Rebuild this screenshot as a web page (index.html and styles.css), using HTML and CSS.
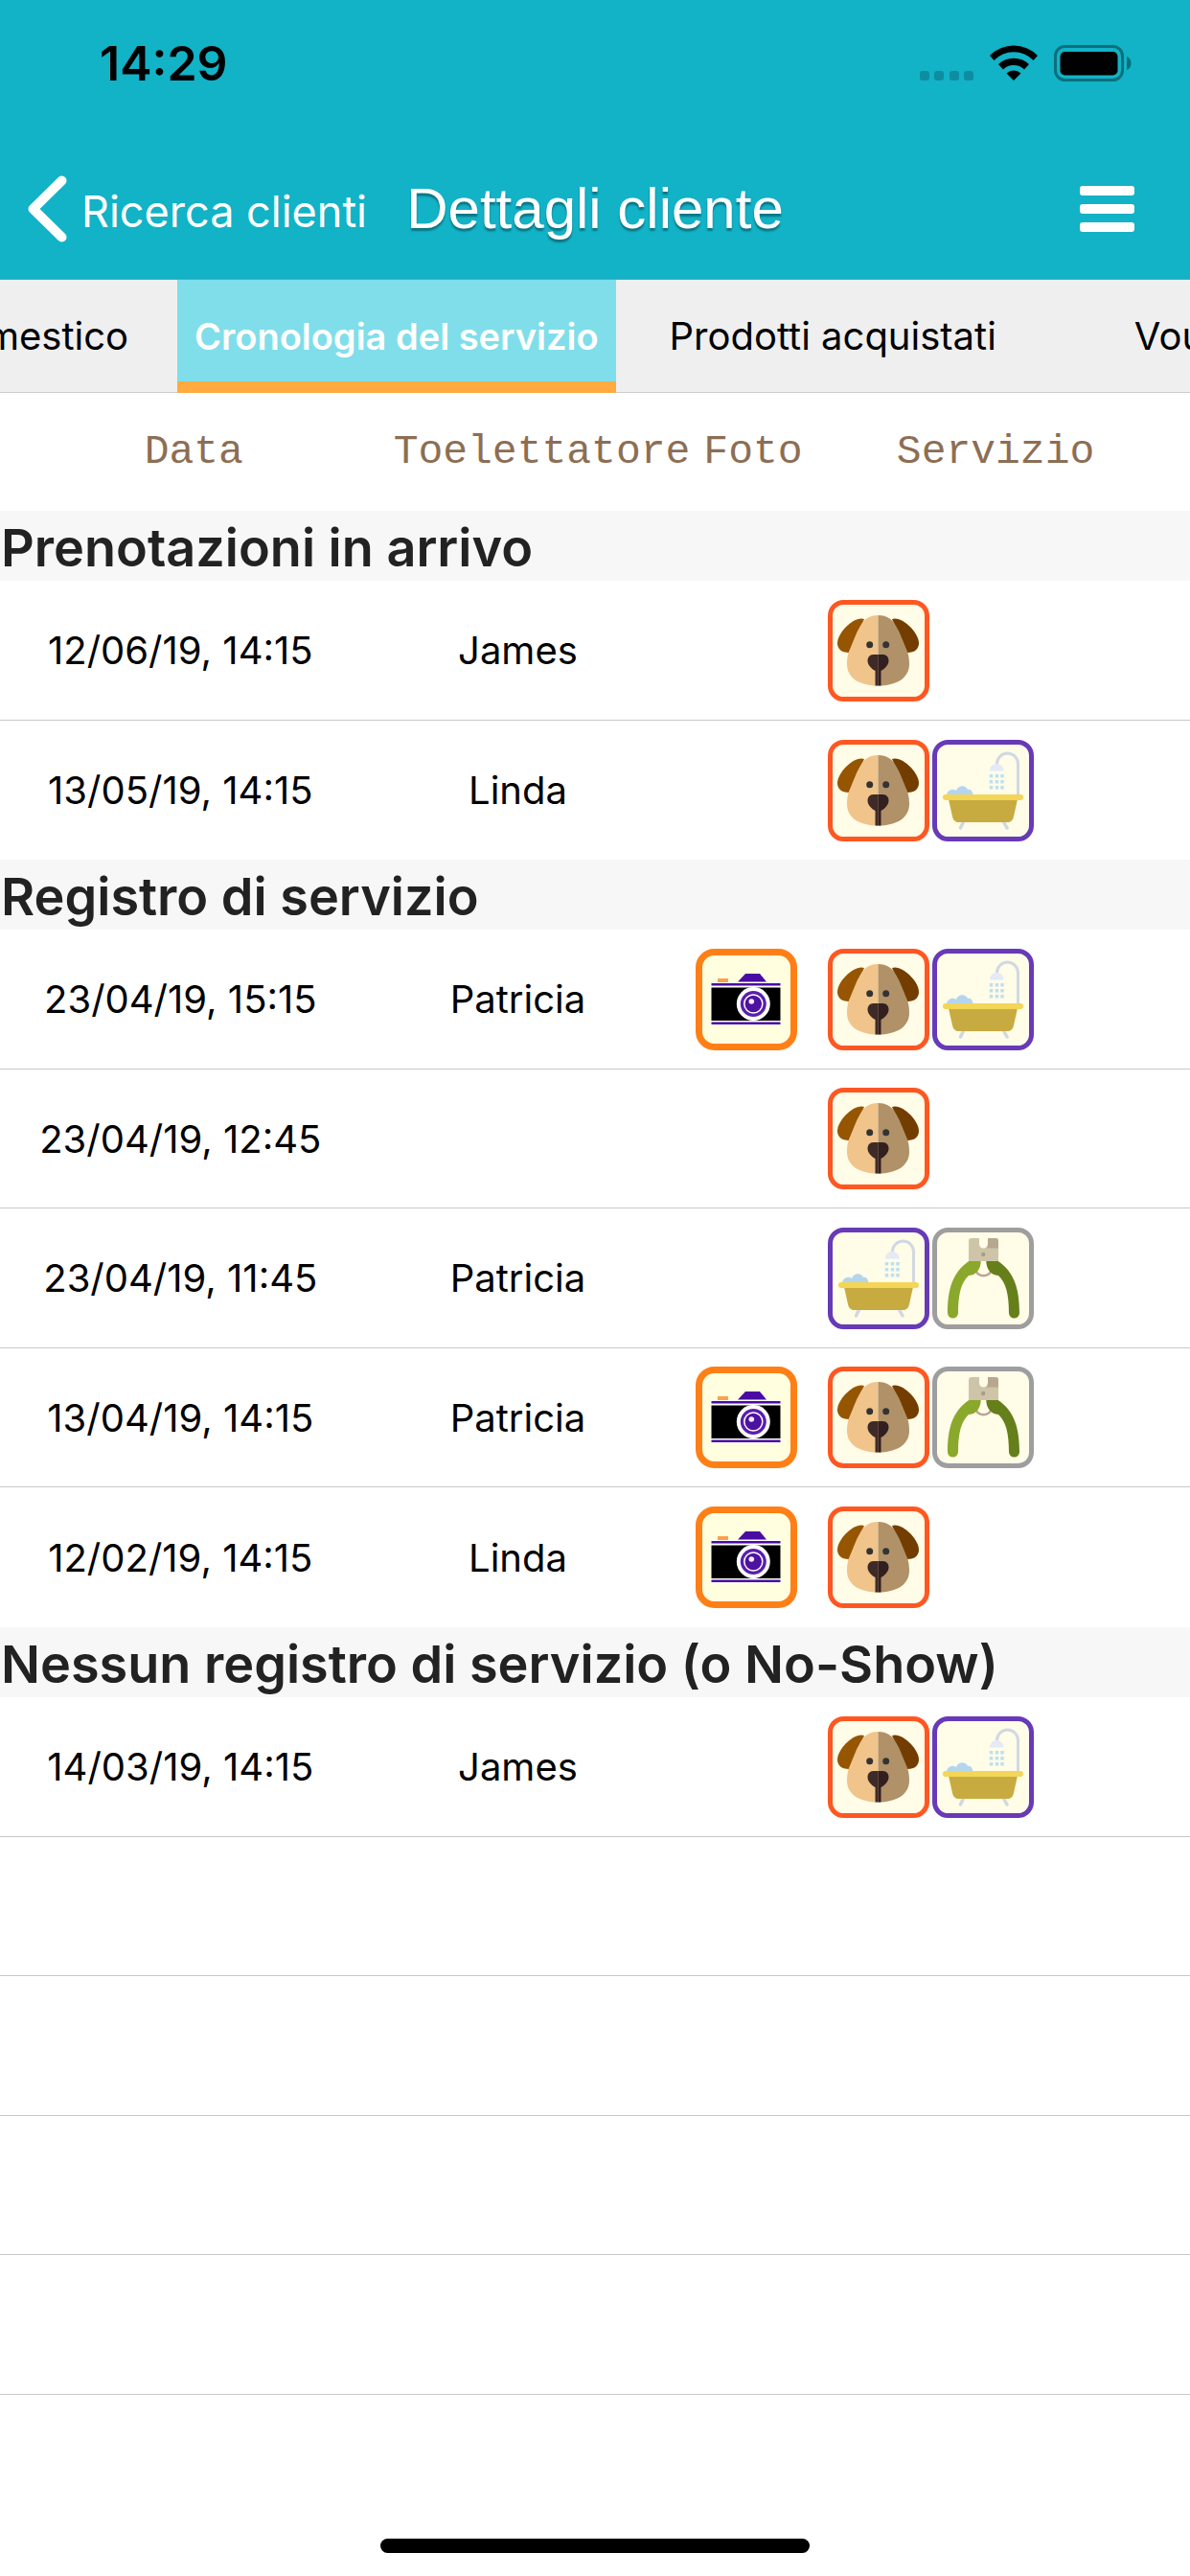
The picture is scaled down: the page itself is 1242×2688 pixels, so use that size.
FILE: index.html
```html
<!DOCTYPE html>
<html lang="it">
<head>
  <meta charset="UTF-8" />
  <meta name="viewport" content="width=device-width, initial-scale=1.0"/>
  <title>Dettagli cliente</title>
  <link rel="stylesheet" href="styles.css">
</head>
<body>
  <!-- icon shapes, used in the table below -->
  <svg class="sprite" aria-hidden="true">
    <symbol id="dog" viewBox="0 0 106 106">
      <rect x="2.5" y="2.5" width="101" height="101" rx="14" fill="#fffce8" stroke="#ff5722" stroke-width="5"/>
      <path d="M38 20C28 16 10 34 10 45c0 6 4 10 12 10z" fill="#965500"/>
      <path d="M67 20c10-4 28 14 28 25 0 6-4 10-12 10z" fill="#733d00"/>
      <path d="M52.5 16C43 16 38 20 34 27 29 35 26 45 22 54c-1.500 4-2 8-2 13 0 15 14 22.500 32.500 22.500z" fill="#f0c48a"/>
      <path d="M52.5 16C62 16 67 20 71 27c5 8 8 18 12 27 1.500 4 2 8 2 13 0 15-14 22.500-32.500 22.500z" fill="#b19168"/>
      <circle cx="43.7" cy="46.7" r="3.5" fill="#333"/>
      <circle cx="60.7" cy="46.7" r="3.5" fill="#333"/>
      <path d="M52.5 57h-5c-4 0-6 3-6 6.500 0 5 5 9 8 10.500v15.500h3z" fill="#3e2b27"/>
      <path d="M52.5 57h5c4 0 6 3 6 6.500 0 5-5 9-8 10.500v15.500h-3z" fill="#321f20"/>
    </symbol>
    <symbol id="bath" viewBox="0 0 106 106">
      <rect x="2.5" y="2.5" width="101" height="101" rx="14" fill="#fffce8" stroke="#673ab7" stroke-width="5"/>
      <path d="M67.5 26v-1a11 11 0 0 1 22 0v33" fill="none" stroke="#d0d9e2" stroke-width="3"/>
      <path d="M60 32.5c0-10 14.500-10 14.500 0z" fill="#e4eaf6"/>
      <path d="M61.5 36v17M67.500 36v17M73 36v17" stroke="#bfdfef" stroke-width="3.5" stroke-dasharray="3.5 2.5"/>
      <path d="M15 58c0-5 6-8 10-5 2-6 10-6 12-1 3-1 5.500 2 5.500 6z" fill="#b5d5ee"/>
      <path d="M32.5 85.500l-3 6.500M74.500 85.500l3.500 6.500" stroke="#d0d9e2" stroke-width="3.5" stroke-linecap="round"/>
      <path d="M17 62h72l-4 18c-1 4-3 6-7 6H28c-4 0-6-2-7-6z" fill="#c8ab40"/>
      <rect x="11" y="57" width="84" height="6" rx="3" fill="#f3d557"/>
    </symbol>
    <symbol id="clipper" viewBox="0 0 106 106">
      <rect x="2.5" y="2.5" width="101" height="101" rx="14" fill="#fffce8" stroke="#9e9e9e" stroke-width="5"/>
      <path d="M46 46c3 5.500 12 5.500 15 0" fill="none" stroke="#b7a795" stroke-width="2.5"/>
      <path d="M39 34.500h11.700c0 8-4 15-12.700 15.500-8 7-11 20-11 39a5.500 5.500 0 0 1-11 0C16 65 21 46 39 34.500z" fill="#8aa82c"/>
      <path d="M68 34.500H56.300c0 8 4 15 12.700 15.500 8 7 11 20 11 39a5.500 5.500 0 0 0 11 0c0-24-5-43-23-54.500z" fill="#657f1a"/>
      <path d="M38 35V14q0-3 3-3h8v6c0 6 9 6 9 0v-6h8q3 0 3 3v21z" fill="#cec5a8"/>
      <path d="M58 11h8q3 0 3 3v7.500H56q2-1 2-4z" fill="#b5a88f"/>
      <circle cx="53.2" cy="28" r="2.2" fill="#aa9b88"/>
    </symbol>
    <symbol id="camera" viewBox="0 0 106 106">
      <rect x="3.5" y="3.5" width="99" height="99" rx="16" fill="#ffffe0" stroke="#ff7f17" stroke-width="7"/>
      <rect x="23" y="31" width="11" height="4" fill="#ffa04d"/>
      <path d="M44 34.500l8-8.500h15l7 8.500z" fill="#4a0ba3"/>
      <rect x="16.5" y="35" width="72" height="44.5" fill="#fff"/>
      <rect x="16.5" y="36" width="72" height="2.5" fill="#4a0ba3"/>
      <rect x="16.5" y="40.5" width="72" height="34.5" fill="#000"/>
      <rect x="16.5" y="76.5" width="72" height="2.5" fill="#4a0ba3"/>
      <circle cx="60.3" cy="57.5" r="17.5" fill="#fff"/>
      <circle cx="60.3" cy="57.5" r="13.5" fill="#5a1fae"/>
      <circle cx="60.3" cy="57.5" r="9.5" fill="#4d12a0" stroke="#fff" stroke-width="1.5"/>
      <circle cx="58.3" cy="55" r="2.8" fill="#f3ecfb"/>
    </symbol>
  </svg>

  <div class="screen">
    <header>
      <div class="status">
        <span>14:29</span>
        <svg width="222" height="38" viewBox="0 0 222 38" aria-hidden="true">
          <g fill="#0f8da0">
            <rect x="1" y="27" width="10" height="10" rx="3"/>
            <rect x="16" y="27" width="10" height="10" rx="3"/>
            <rect x="32" y="27" width="10" height="10" rx="3"/>
            <rect x="47" y="27" width="10" height="10" rx="3"/>
          </g>
          <path d="M74 11a35 35 0 0 1 50 0l-4.500 5a28.500 28.500 0 0 0-41 0z"/>
          <path d="M83 20a23.500 23.500 0 0 1 32 0l-5 5.500a16 16 0 0 0-22 0z"/>
          <path d="M91.500 29.500a11 11 0 0 1 15 0L99 37z"/>
          <rect x="142.5" y="1.5" width="70" height="35" rx="10" fill="none" stroke="#0c6f7c" stroke-width="3"/>
          <rect x="147.5" y="7" width="60" height="24.5" rx="5"/>
          <path d="M217 12c6 2 6 12 0 14z" fill="#0c6f7c"/>
        </svg>
      </div>
      <div class="navbar">
        <button class="back">
          <svg width="42" height="70" viewBox="0 0 42 70" aria-hidden="true">
            <path d="M36.5 5.500L6.500 35l30 29.500" fill="none" stroke="#fff" stroke-width="10" stroke-linecap="round" stroke-linejoin="round"/>
          </svg>
          <span>Ricerca clienti</span>
        </button>
        <h1>Dettagli cliente</h1>
        <button class="menu" aria-label="Menu"><span></span><span></span><span></span></button>
      </div>
    </header>

    <nav class="tabs">
      <button class="tab first">Animale domestico</button>
      <button class="tab active">Cronologia del servizio</button>
      <button class="tab products">Prodotti acquistati</button>
      <button class="tab voucher">Voucher</button>
    </nav>

    <table>
      <colgroup>
        <col class="col-date"><col class="col-name"><col class="col-photo"><col class="col-service">
      </colgroup>
      <thead>
        <tr>
          <th class="date">Data</th>
          <th class="name">Toelettatore</th>
          <th class="photo">Foto</th>
          <th class="service">Servizio</th>
        </tr>
      </thead>
      <tbody>
        <tr class="section"><th colspan="4">Prenotazioni in arrivo</th></tr>
        <tr>
          <td class="date">12/06/19, 14:15</td>
          <td class="name">James</td>
          <td class="photo"></td>
          <td class="service"><div class="icons"><svg><use href="#dog"/></svg></div></td>
        </tr>
        <tr>
          <td class="date">13/05/19, 14:15</td>
          <td class="name">Linda</td>
          <td class="photo"></td>
          <td class="service"><div class="icons"><svg><use href="#dog"/></svg><svg><use href="#bath"/></svg></div></td>
        </tr>
      </tbody>
      <tbody>
        <tr class="section"><th colspan="4">Registro di servizio</th></tr>
        <tr>
          <td class="date">23/04/19, 15:15</td>
          <td class="name">Patricia</td>
          <td class="photo"><button class="photo-btn" aria-label="Foto"><svg><use href="#camera"/></svg></button></td>
          <td class="service"><div class="icons"><svg><use href="#dog"/></svg><svg><use href="#bath"/></svg></div></td>
        </tr>
        <tr>
          <td class="date">23/04/19, 12:45</td>
          <td class="name"></td>
          <td class="photo"></td>
          <td class="service"><div class="icons"><svg><use href="#dog"/></svg></div></td>
        </tr>
        <tr>
          <td class="date">23/04/19, 11:45</td>
          <td class="name">Patricia</td>
          <td class="photo"></td>
          <td class="service"><div class="icons"><svg><use href="#bath"/></svg><svg><use href="#clipper"/></svg></div></td>
        </tr>
        <tr>
          <td class="date">13/04/19, 14:15</td>
          <td class="name">Patricia</td>
          <td class="photo"><button class="photo-btn" aria-label="Foto"><svg><use href="#camera"/></svg></button></td>
          <td class="service"><div class="icons"><svg><use href="#dog"/></svg><svg><use href="#clipper"/></svg></div></td>
        </tr>
        <tr>
          <td class="date">12/02/19, 14:15</td>
          <td class="name">Linda</td>
          <td class="photo"><button class="photo-btn" aria-label="Foto"><svg><use href="#camera"/></svg></button></td>
          <td class="service"><div class="icons"><svg><use href="#dog"/></svg></div></td>
        </tr>
      </tbody>
      <tbody class="last">
        <tr class="section"><th colspan="4">Nessun registro di servizio (o No-Show)</th></tr>
        <tr>
          <td class="date">14/03/19, 14:15</td>
          <td class="name">James</td>
          <td class="photo"></td>
          <td class="service"><div class="icons"><svg><use href="#dog"/></svg><svg><use href="#bath"/></svg></div></td>
        </tr>
      </tbody>
      <tbody class="last">
        <tr><td colspan="4"></td></tr>
        <tr><td colspan="4"></td></tr>
        <tr><td colspan="4"></td></tr>
        <tr><td colspan="4"></td></tr>
      </tbody>
    </table>

    <div class="home-bar"></div>
  </div>
</body>
</html>
```
FILE: styles.css
```css
* {
  box-sizing: border-box;
}
body {
  margin: 0;
  background: #fff;
  color: #000;
  font-family: Inter, "Liberation Sans", sans-serif;
  font-size: 40px;
}
button {
  padding: 0;
  border: none;
  background: none;
  color: inherit;
  font: inherit;
  cursor: pointer;
}
.sprite {
  display: none;
}
.screen {
  display: flex;
  flex-direction: column;
  min-height: 100vh;
}
header {
  background: #12b2c7;
  border-bottom: 1px solid #7d9a9d;
}
.status {
  display: flex;
  align-items: center;
  justify-content: space-between;
  height: 132px;
  padding: 0 61px 0 104px;
  font-size: 50px;
  font-weight: 600;
}
.navbar {
  display: grid;
  grid-template-columns: 1fr auto 1fr;
  align-items: center;
  height: 159px;
  padding: 12px 28px 0;
  color: #fff;
}
.back {
  display: flex;
  align-items: center;
  gap: 15px;
  font-size: 45px;
  white-space: nowrap;
}
.back span {
  padding-top: 6px;
}
h1 {
  margin: 0;
  font-family: "Liberation Sans", Arial, sans-serif;
  font-size: 60px;
  font-weight: 400;
  text-shadow: 0 3px 2px rgba(0,0,0,0.35);
}
.menu {
  display: flex;
  flex-direction: column;
  gap: 9px;
  justify-self: end;
  width: 57px;
  margin-right: 30px;
}
.menu span {
  height: 10px;
  border-radius: 3px;
  background: #fff;
}
.tabs {
  display: flex;
  height: 118px;
  overflow: hidden;
  background: #efefef;
}
.tab {
  flex: none;
  padding: 0 18px;
  border-bottom: 1px solid #ccc;
  white-space: nowrap;
}
.first {
  display: flex;
  align-items: center;
  justify-content: flex-end;
  width: 185px;
  padding-right: 51px;
  overflow: hidden;
}
.active {
  border-bottom: 12px solid #ffab40;
  padding-top: 11px;
  background: #80deea;
  color: #fff;
  font-size: 38px;
  font-weight: 600;
}
.products {
  padding: 0 56px;
}
.voucher {
  padding: 0 88px;
}
table {
  width: 100%;
  table-layout: fixed;
  border-spacing: 0;
}
.col-date {
  width: 30%;
}
.col-name {
  width: 28%;
}
.col-photo {
  width: 9%;
}
.col-service {
  width: 33%;
}
th, td {
  padding: 0;
  text-align: center;
}
thead th {
  height: 123px;
  color: #8d6e53;
  font-family: "Liberation Mono", "Courier New", monospace;
  font-size: 43px;
  font-weight: 400;
}
thead .date {
  padding-left: 32px;
}
thead .name {
  padding-left: 38px;
}
thead .photo {
  padding-left: 14px;
}
thead .service {
  padding-left: 4px;
}
tbody tr {
  height: 145px;
}
tbody tr:nth-child(even) {
  height: 146px;
}
tbody .section {
  height: 73px;
}
.section th {
  padding: 4px 0 0 1px;
  background: #f7f7f7;
  color: #222;
  font-size: 54px;
  font-weight: 600;
  line-height: 66px;
  text-align: left;
}
td {
  border-bottom: 1px solid #c8c7cc;
}
tbody:not(.last) tr:last-child td {
  border-bottom: none;
}
td.date {
  padding-left: 4px;
}
td.name {
  padding-right: 12px;
}
td.photo {
  padding-left: 6px;
  text-align: left;
}
td.service {
  padding-left: 32px;
}
.icons {
  display: flex;
  gap: 3px;
}
.photo-btn {
  display: block;
}
.icons svg, .photo-btn svg {
  display: block;
  width: 106px;
  height: 106px;
}
.home-bar {
  width: 36%;
  height: 15px;
  margin: auto auto 24px;
  border-radius: 8px;
  background: #000;
}
```
